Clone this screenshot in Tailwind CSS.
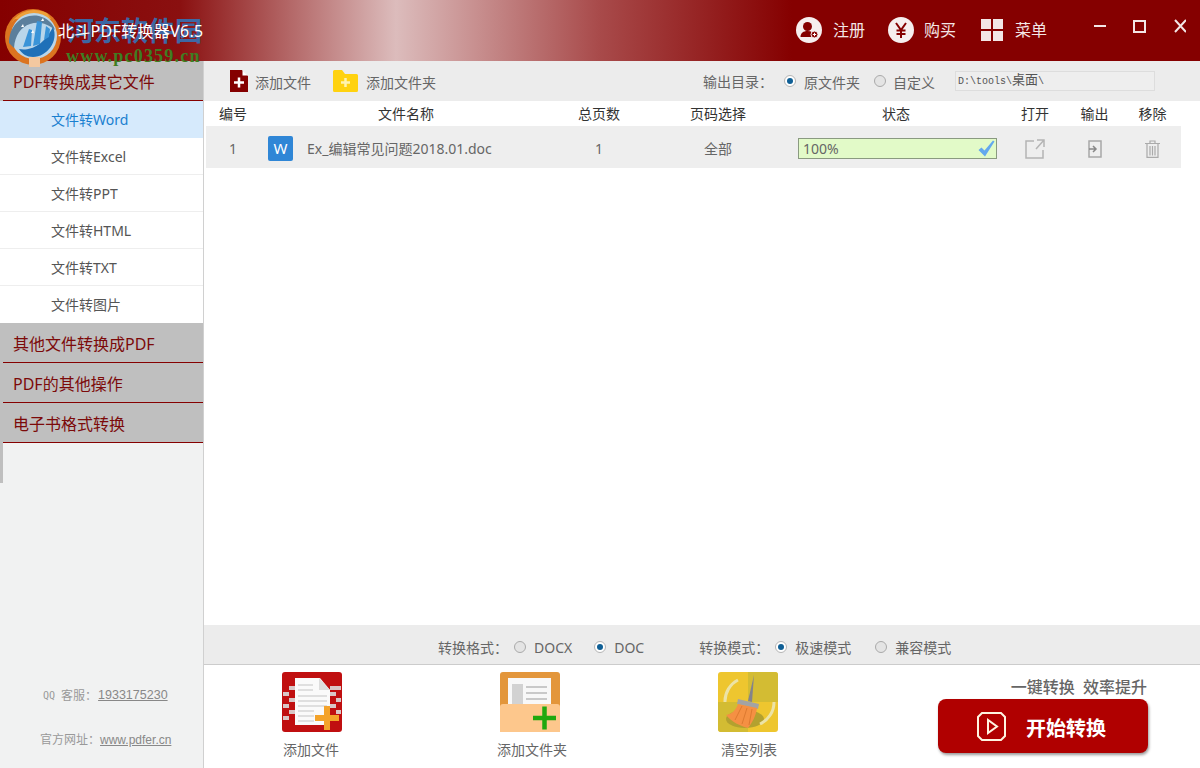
<!DOCTYPE html>
<html lang="en">
<head>
    <meta charset="UTF-8">
    <title>北斗PDF转换器</title>
    <script src="https://cdn.jsdelivr.net/npm/@tailwindcss/browser@4"></script>
</head>
<body class="w-[1200px] h-[768px] overflow-hidden relative bg-white text-[14px] text-[#666] font-['Noto_Sans','Noto_Sans_CJK_SC',sans-serif]">

    <!-- title bar -->
    <header class="h-[61px] flex items-center bg-[linear-gradient(90deg,#850000_0%,#8a1010_15%,#dcbcbc_33%,#a84a4a_50%,#850000_66%,#850000_100%)]">
        <span class="relative z-10 ml-[58px] text-[16px] tracking-[0.3px] text-white">北斗PDF转换器V6.5</span>
        <div class="ml-auto flex items-center text-[16px] text-[#f3e6e6] -mt-[2px]">
            <svg class="w-[26px] h-[26px]" viewBox="0 0 26 26">
                <circle cx="13" cy="13" r="13" fill="#f6eeee"/>
                <circle cx="11.5" cy="9.5" r="4.5" fill="#850000"/>
                <path d="M4.5 20c0-4 3-6 7-6s6 2 6.500 3v3z" fill="#850000"/>
                <circle cx="18.500" cy="17.500" r="3.500" fill="#850000" stroke="#f6eeee"/>
                <path d="M16.800 17.500h3.400M18.500 15.800v3.400" stroke="#fff"/>
            </svg>
            <span class="ml-[11px]">注册</span>
            <svg class="ml-[23px] w-[26px] h-[26px]" viewBox="0 0 26 26">
                <circle cx="13" cy="13" r="13" fill="#f6eeee"/>
                <path d="M8 6l5 7 5-7M13 13v8M8.500 13.500h9M8.500 17h9" fill="none" stroke="#850000" stroke-width="2"/>
            </svg>
            <span class="ml-[10px]">购买</span>
            <div class="ml-[25px] grid grid-cols-2 gap-[2px] w-[22px] h-[22px]">
                <span class="bg-[#f3e6e6]"></span><span class="bg-[#f3e6e6]"></span>
                <span class="bg-[#f3e6e6]"></span><span class="bg-[#f3e6e6]"></span>
            </div>
            <span class="ml-[12px]">菜单</span>
            <svg class="ml-[47px] mr-[14px] w-[92px] h-[14px] -mt-[8px]" viewBox="0 0 92 14" fill="none" stroke="#f3e6e6" stroke-width="2">
                <path d="M0 7h12"/>
                <rect x="40" y="2" width="11" height="11"/>
                <path d="M81 1l11 12M92 1L81 13"/>
            </svg>
        </div>
    </header>

    <div class="flex h-[707px]">
        <!-- sidebar -->
        <aside class="w-[204px] shrink-0 flex flex-col bg-[#f1f2f2] border-r border-[#d0d0d0]">
            <h2 class="h-[40px] bg-[#bfbfbf] pl-[13px] text-[16px] leading-[42px] text-[#7c0a0a] relative after:absolute after:left-[3px] after:right-0 after:bottom-0 after:h-px after:bg-[#850000]">PDF转换成其它文件</h2>
            <ul class="text-[14px] text-[#555]">
                <li class="h-[37px] leading-[37px] pl-[51px] bg-[#d6eafc] text-[#1a80d0]">文件转Word</li>
                <li class="h-[37px] leading-[37px] pl-[51px] bg-white border-b border-[#eeeeee]">文件转Excel</li>
                <li class="h-[37px] leading-[37px] pl-[51px] bg-white border-b border-[#eeeeee]">文件转PPT</li>
                <li class="h-[37px] leading-[37px] pl-[51px] bg-white border-b border-[#eeeeee]">文件转HTML</li>
                <li class="h-[37px] leading-[37px] pl-[51px] bg-white border-b border-[#eeeeee]">文件转TXT</li>
                <li class="h-[37px] leading-[37px] pl-[51px] bg-white">文件转图片</li>
            </ul>
            <h2 class="h-[40px] bg-[#bfbfbf] pl-[13px] text-[16px] leading-[42px] text-[#7c0a0a] relative after:absolute after:left-[3px] after:right-0 after:bottom-0 after:h-px after:bg-[#850000]">其他文件转换成PDF</h2>
            <h2 class="h-[40px] bg-[#bfbfbf] pl-[13px] text-[16px] leading-[42px] text-[#7c0a0a] relative after:absolute after:left-[3px] after:right-0 after:bottom-0 after:h-px after:bg-[#850000]">PDF的其他操作</h2>
            <h2 class="h-[40px] bg-[#bfbfbf] pl-[13px] text-[16px] leading-[42px] text-[#7c0a0a] relative after:absolute after:left-[3px] after:right-0 after:bottom-0 after:h-px after:bg-[#850000]">电子书格式转换</h2>
            <div class="w-[3px] h-[40px] bg-[#bfbfbf]"></div>
            <div class="mt-auto mb-[19px] text-[12px] text-[#999] flex flex-col gap-[26px]">
                <p class="pl-[43px] flex items-center whitespace-nowrap"><span class="text-[10px] font-['DejaVu_Sans_Mono',monospace] mr-[6px]">QQ</span>客服：<span class="ml-[1px] underline text-[#888] text-[12.5px] font-['Liberation_Sans',sans-serif]">1933175230</span></p>
                <p class="pl-[40px] whitespace-nowrap">官方网址：<span class="underline text-[#888] text-[12px] font-['Liberation_Sans',sans-serif]">www.pdfer.cn</span></p>
            </div>
        </aside>

        <!-- main -->
        <main class="flex-1 flex flex-col min-w-0">
            <div class="h-[40px] shrink-0 bg-[#ececec] flex items-center">
                <svg class="ml-[26px] w-[18px] h-[22px]" viewBox="0 0 18 22">
                    <path d="M0 0h12l6 6v16H0z" fill="#850000"/>
                    <path d="M12.500 0v5.500H18" fill="#fff"/>
                    <path d="M9 7.500v10M4 12.500h10" stroke="#fff" stroke-width="2.500"/>
                </svg>
                <span class="ml-[7px] mt-[2px]">添加文件</span>
                <svg class="ml-[22px] w-[25px] h-[22px]" viewBox="0 0 25 22">
                    <path d="M0 1.500Q0 0 1.500 0H9l3 4h11.500Q25 4 25 5.500V20.500Q25 22 23.500 22H1.500Q0 22 0 20.500z" fill="#ffd20f"/>
                    <path d="M12.500 8v9M8 12.500h9" stroke="#fff3b0" stroke-width="2.500"/>
                </svg>
                <span class="ml-[8px] mt-[2px]">添加文件夹</span>
                <span class="ml-[267px]">输出目录：</span>
                <span class="ml-[11px] w-[12px] h-[12px] rounded-full border border-[#b5b5b5] bg-white flex items-center justify-center"><span class="w-[6px] h-[6px] rounded-full bg-[#0f5f95]"></span></span>
                <span class="ml-[8px] mt-[2px]">原文件夹</span>
                <span class="ml-[14px] w-[12px] h-[12px] rounded-full border border-[#aaaaaa] bg-[#e4e4e4]"></span>
                <span class="ml-[7px] mt-[2px]">自定义</span>
                <div class="ml-[20px] w-[200px] h-[20px] border border-[#dddddd] bg-[#eeeeee] pl-[2px] text-[10px] leading-[18px] text-[#555] font-['Liberation_Mono','Noto_Sans_CJK_SC',monospace]">D:\tools\<span class="text-[13px]">桌面</span>\</div>
            </div>

            <div class="flex-1 pl-[2px]">
                <div class="w-[975px] grid grid-cols-[54px_289px_100px_138px_218px_60px_59px_57px] h-[26px] items-center text-center text-[14px] text-[#333] border-b border-[#eeeeee]">
                    <span>编号</span><span class="pl-[3px]">文件名称</span><span>总页数</span><span>页码选择</span><span>状态</span><span>打开</span><span>输出</span><span>移除</span>
                </div>
                <div class="w-[975px] grid grid-cols-[54px_289px_100px_138px_218px_60px_59px_57px] h-[41px] pt-[2px] items-center text-center bg-[#eeeeee] text-[#666]">
                    <span>1</span>
                    <div class="flex items-center text-left">
                        <span class="ml-[8px] w-[25px] h-[25px] rounded-[2px] bg-[#2f86d6] text-white text-[15px] leading-[25px] text-center">W</span>
                        <span class="ml-[14px]">Ex_编辑常见问题2018.01.doc</span>
                    </div>
                    <span>1</span>
                    <span>全部</span>
                    <div class="ml-[11px] w-[199px] h-[21px] border border-[#8a9a80] bg-[#e2fac8] flex items-center pl-[4px] text-left relative">
                        100%
                        <svg class="absolute right-[1px] top-[1px] w-[17px] h-[17px]" viewBox="0 0 17 17"><path d="M0.500 10l3-2.500 3 3L15 0.500l1.500 1L7 16.500z" fill="#63a8ee"/></svg>
                    </div>
                    <svg class="mx-auto w-[20px] h-[20px]" viewBox="0 0 20 20" fill="none" stroke="#b4b4b4" stroke-width="1.500"><path d="M9 2H1v17h17v-8M12 1h7v7M19 1l-8 9"/></svg>
                    <svg class="mx-auto w-[14px] h-[18px]" viewBox="0 0 14 18" fill="none" stroke="#a8a8a8" stroke-width="1.500"><path d="M1 1h12v16H1z"/><path d="M1 9h6M5 6l3 3-3 3" stroke="#888"/></svg>
                    <svg class="mx-auto w-[15px] h-[18px]" viewBox="0 0 15 18" fill="none" stroke="#aaaaaa" stroke-width="1.200"><path d="M0 3.500h15M5 3.500V1h5v2.500M2 3.500V17.400h11V3.500M5 6v9.500M7.500 6v9.500M10 6v9.500"/></svg>
                </div>
            </div>

            <div class="h-[40px] shrink-0 pt-[5px] bg-[#ececec] border-b border-[#cccccc] flex items-center">
                <span class="ml-[234px]">转换格式：</span>
                <span class="ml-[6px] w-[12px] h-[12px] rounded-full border border-[#aaaaaa] bg-[#e4e4e4]"></span>
                <span class="ml-[8px]">DOCX</span>
                <span class="ml-[22px] w-[12px] h-[12px] rounded-full border border-[#b5b5b5] bg-white flex items-center justify-center"><span class="w-[6px] h-[6px] rounded-full bg-[#0f5f95]"></span></span>
                <span class="ml-[8px]">DOC</span>
                <span class="ml-[55px]">转换模式：</span>
                <span class="ml-[6px] w-[12px] h-[12px] rounded-full border border-[#b5b5b5] bg-white flex items-center justify-center"><span class="w-[6px] h-[6px] rounded-full bg-[#0f5f95]"></span></span>
                <span class="ml-[8px]">极速模式</span>
                <span class="ml-[24px] w-[12px] h-[12px] rounded-full border border-[#aaaaaa] bg-[#e4e4e4]"></span>
                <span class="ml-[8px]">兼容模式</span>
            </div>

            <div class="h-[103px] shrink-0 flex relative">
                <div class="w-[60px] ml-[78px] mt-[7px] flex flex-col items-center">
                    <svg class="w-[60px] h-[60px] shrink-0" viewBox="0 0 60 60">
                        <rect width="60" height="60" rx="3" fill="#c00f10"/>
                        <path d="M7 14h6v4H7zM1 20h6v4H1zM7 26h6v4H7zM1 32h6v4H1zM7 38h6v4H7zM1 44h6v4H1zM48 14h6v4h-6zM54 14h5v4h-5zM48 20h6v4h-6zM54 26h5v4h-5zM48 32h6v4h-6zM54 38h5v4h-5z" fill="#d9c6c6"/>
                        <path d="M13 6h25l10 12v35H13z" fill="#fafafa"/>
                        <path d="M37 6v12h11z" fill="#dddddd"/>
                        <path d="M16 13h15M16 18h15M16 24h29M16 29h29M16 34h29M16 39h16M16 44h16M16 49h16" stroke="#dfdfdf" stroke-width="2"/>
                        <path d="M42 34h6v9h9v6h-9v9h-6v-9h-9v-6h9z" fill="#f4a32a"/>
                    </svg>
                    <span class="mt-[7px] mr-[2px] text-[14px] whitespace-nowrap">添加文件</span>
                </div>
                <div class="w-[60px] ml-[158px] mt-[7px] flex flex-col items-center">
                    <svg class="w-[60px] h-[60px] shrink-0" viewBox="0 0 60 60">
                        <path d="M0 3q0-3 3-3h54q3 0 3 3v36H0z" fill="#e3963b"/>
                        <rect x="8" y="6" width="43" height="30" fill="#f8f8f8"/>
                        <rect x="12" y="12" width="11" height="20" fill="#d2d2d2"/>
                        <path d="M26 15h21M26 21h21M26 27h21" stroke="#c9c9c9" stroke-width="2"/>
                        <path d="M0 35q0-3 3-3h54q3 0 3 3v25H0z" fill="#fdc78c"/>
                        <path d="M33 46h23M44.500 34.500v23" stroke="#1fa80e" stroke-width="4.500"/>
                    </svg>
                    <span class="mt-[7px] ml-[4px] text-[14px] whitespace-nowrap">添加文件夹</span>
                </div>
                <div class="w-[60px] ml-[158px] mt-[7px] flex flex-col items-center">
                    <svg class="w-[60px] h-[60px] shrink-0" viewBox="0 0 60 60">
                        <rect width="60" height="60" rx="3" fill="#eec62f"/>
                        <path d="M30 0h27q3 0 3 3v27H30zM0 30h30v30H3q-3 0-3-3z" fill="#d3bc33"/>
                        <ellipse cx="27" cy="47" rx="19" ry="9" fill="#b3a12f"/>
                        <path d="M20 8A24 24 0 0 0 7 30M42 52A24 24 0 0 0 56 30" fill="none" stroke="#ece3a6" stroke-width="3"/>
                        <path d="M36 3l-6 26 4 1z" fill="#83838c"/>
                        <path d="M20 27l21 5-1 5-21-5z" fill="#a3a3a3"/>
                        <path d="M20 32l19 4c-1 8-5 15-9 20-8-2-16-6-22-13 6-1 10-5 12-11z" fill="#f59043"/>
                        <path d="M24 34l-7 14M29 36l-5 16M34 37l-3 16" stroke="#dd7a30"/>
                    </svg>
                    <span class="mt-[7px] ml-[2px] text-[14px] whitespace-nowrap">清空列表</span>
                </div>
                <div class="ml-auto mr-[52px] flex flex-col items-end">
                    <span class="mt-[11px] mr-px text-[16px] leading-[22px] font-medium text-[#666]">一键转换&nbsp;&nbsp;效率提升</span>
                    <button class="mt-[1px] w-[210px] h-[54px] rounded-lg bg-[#b00000] shadow-[1px_2px_3px_rgba(0,0,0,.4)] flex items-center text-white text-[20px] font-bold">
                        <svg class="ml-[39px] w-[29px] h-[29px]" viewBox="0 0 29 29" fill="none" stroke="#fff3e0" stroke-width="2"><path d="M5 1h19l4 4v19l-4 4H5l-4-4V5z"/><path d="M11 8v13l9-6.500z"/></svg>
                        <span class="ml-[20px] mt-[5px]">开始转换</span>
                    </button>
                </div>
            </div>
        </main>
    </div>

    <!-- watermark over the title bar -->
    <div class="absolute left-[5px] top-[7px] w-[58px] h-[60px] pointer-events-none">
        <svg class="w-[58px] h-[60px]" viewBox="0 0 58 60">
            <circle cx="28" cy="30" r="28" fill="#dc7420"/>
            <path d="M6 16A28 28 0 0 1 42 6l4 6H10z" fill="#eda03a"/>
            <circle cx="29" cy="29" r="23" fill="#b9d6ea"/>
            <path d="M4 36C4 18 18 6 34 9c8 2 14 7 16 14-7-6-16-9-25-6-9 3-15 11-16 24z" fill="#5b7f9c"/>
            <path d="M14 42c10 2 24-2 34-22 6 14-6 30-20 30-6 0-11-3-14-8z" fill="#1f70b8"/>
            <path d="M18 40l6-18 3 1-1 16zM28 39l4-25 5 1-2 22zM39 33l2-14 4 3-1 8z" fill="#3a94d8"/>
            <path d="M16 20l2-3 1 3zM36 14l2-3 1 3zM26 26l2-3 1 3z" fill="#fff"/>
            <rect x="24" y="50" width="11" height="10" fill="#f3c8a0"/>
        </svg>
    </div>
    <div class="absolute left-[67px] top-[14px] text-[27px] leading-[32px] font-bold text-[#2f78c0]/85 font-['Noto_Sans_CJK_SC',sans-serif] pointer-events-none whitespace-nowrap">河东软件园</div>
    <div class="absolute left-[66px] top-[47px] text-[18px] leading-[18px] font-bold text-[#3f7d22] font-['Liberation_Serif',serif] tracking-[1.2px] pointer-events-none whitespace-nowrap">www.pc0359.cn</div>
</body>
</html>
